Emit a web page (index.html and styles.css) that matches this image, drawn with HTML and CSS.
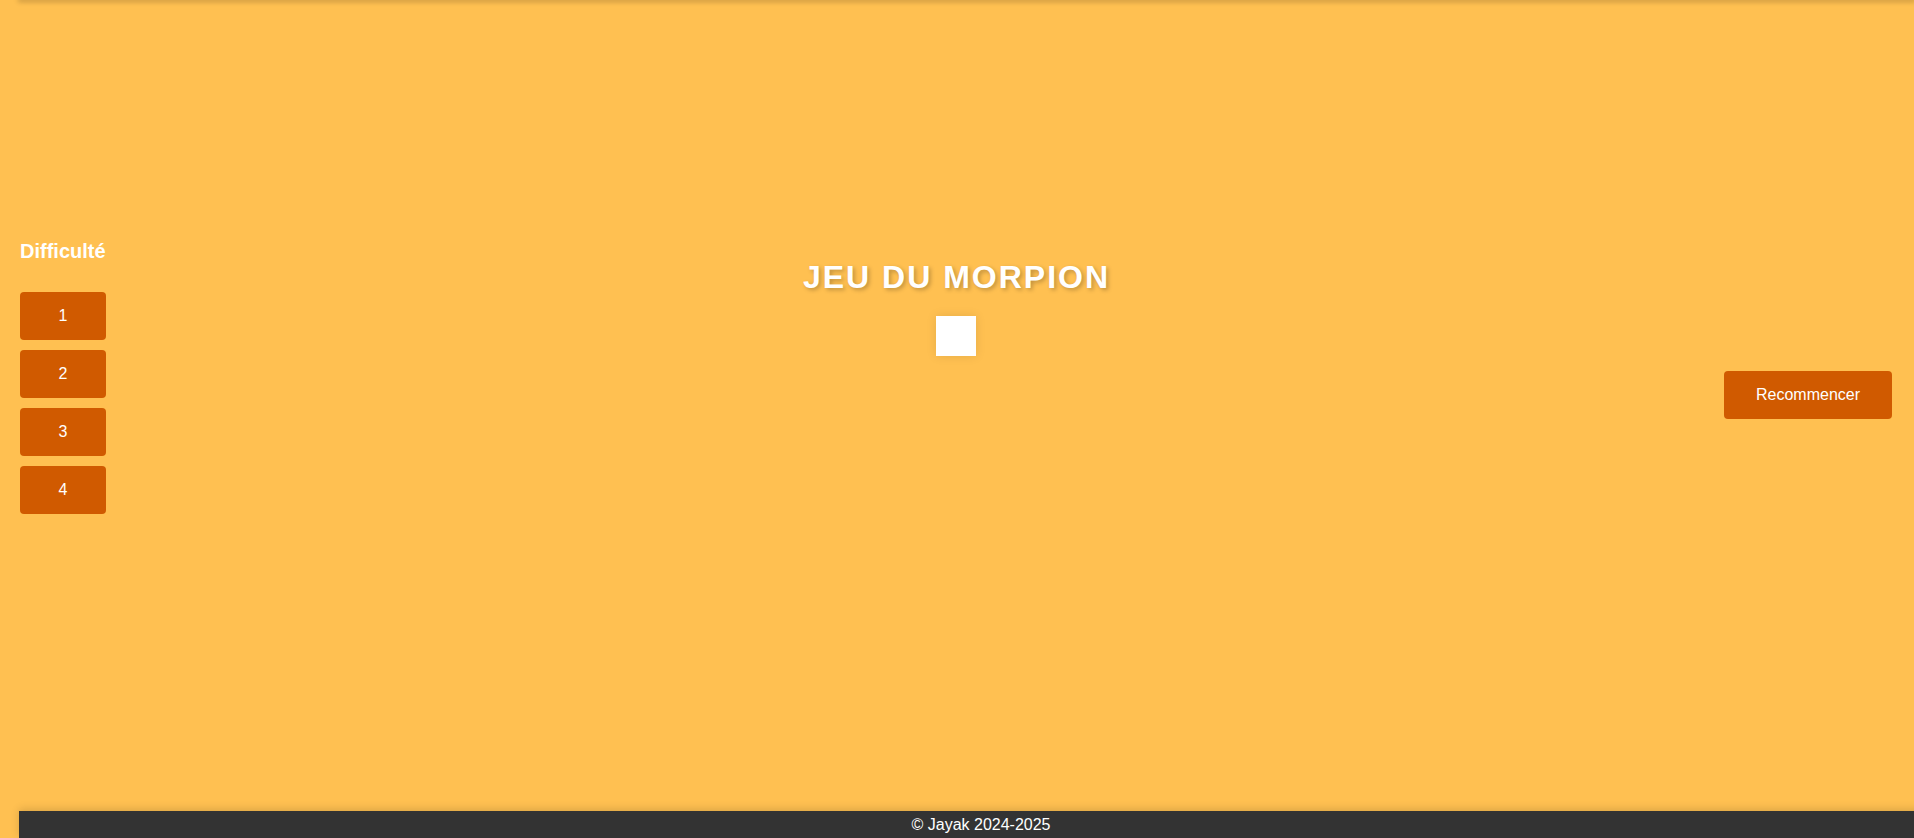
FILE: index.html
```html
<!DOCTYPE html>
<html lang="fr">
<head>
<meta charset="utf-8">
<title>Jeu du Morpion</title>
<link rel="stylesheet" href="styles.css">
</head>
<body>
<header class="topbar"></header>
<main class="game">
  <aside class="levels">
    <h3 class="levels-title">Difficulté</h3>
    <div class="levels-list">
      <button class="btn level-btn">1</button>
      <button class="btn level-btn">2</button>
      <button class="btn level-btn">3</button>
      <button class="btn level-btn">4</button>
    </div>
  </aside>
  <section class="board-area">
    <h1 class="title">JEU DU MORPION</h1>
    <div class="board"><div class="cell"></div></div>
  </section>
  <aside class="actions">
    <button class="btn restart-btn">Recommencer</button>
  </aside>
</main>
<footer class="footer">© Jayak 2024-2025</footer>
</body>
</html>
```
FILE: styles.css
```css
html, body {
  margin: 0;
  padding: 0;
}

body {
  height: 100vh;
  display: flex;
  flex-direction: column;
  overflow: hidden;
  background: #ffc051;
  font-family: "Liberation Sans", Arial, sans-serif;
  color: #fff;
}

.topbar {
  height: 0;
  margin-left: 20px;
  flex-shrink: 0;
  box-shadow: 0 0 5px 2px rgba(0, 0, 0, 0.22);
}

.game {
  flex: 1;
  display: grid;
  grid-template-columns: 1fr auto 1fr;
  padding: 0 21px 0 20px;
}

.levels {
  justify-self: start;
  padding-top: 240px;
}

.levels-title {
  margin: 0 0 29px;
  font-size: 20px;
  font-weight: bold;
  line-height: 23px;
}

.levels-list {
  display: flex;
  flex-direction: column;
  gap: 10px;
}

.btn {
  border: none;
  border-radius: 4px;
  background: #d05a00;
  color: #fff;
  font-family: "Liberation Sans", Arial, sans-serif;
  font-size: 16px;
  height: 48px;
  padding: 0;
  cursor: pointer;
}

.level-btn {
  width: 86px;
}

.board-area {
  padding-top: 259px;
  display: flex;
  flex-direction: column;
  align-items: center;
}

.title {
  margin: 0 0 20px;
  font-size: 32px;
  line-height: 37px;
  font-weight: bold;
  letter-spacing: 2px;
  text-shadow: 2px 2px 4px rgba(0, 0, 0, 0.25);
}

.board {
  display: grid;
}

.cell {
  width: 40px;
  height: 40px;
  background: #fff;
  box-shadow: 0 0 10px rgba(0, 0, 0, 0.1);
}

.actions {
  justify-self: end;
  padding-top: 371px;
  padding-right: 1px;
}

.restart-btn {
  width: 168px;
}

.footer {
  flex-shrink: 0;
  height: 27px;
  line-height: 27px;
  margin-left: 19px;
  width: calc(100% + 10px);
  background: #333;
  color: #fff;
  font-size: 16px;
  text-align: center;
  box-shadow: 0 -2px 8px rgba(0, 0, 0, 0.15);
}
```
